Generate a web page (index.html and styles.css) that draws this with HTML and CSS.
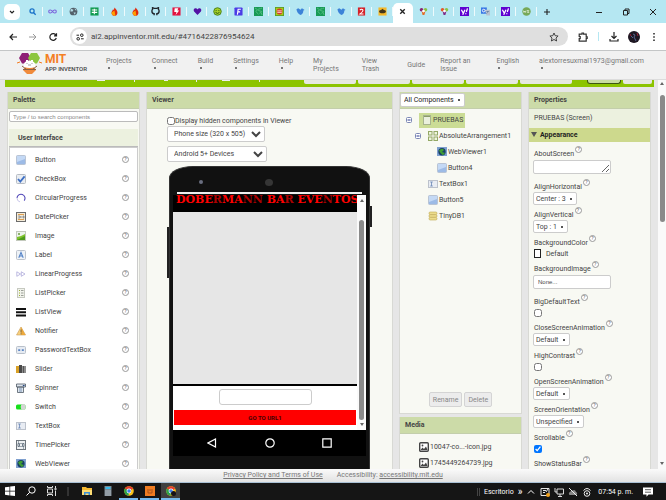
FILE: index.html
```html
<!DOCTYPE html>
<html lang="es">
<head>
    <meta charset="UTF-8">
    <meta name="viewport" content="width=device-width, initial-scale=1.0">
    <title>MIT App Inventor</title>
    <link rel="stylesheet" href="styles.css">
</head>
<body>
    <!-- Iconos compartidos -->
    <svg class="sprite" aria-hidden="true">
        <symbol id="i-button" viewBox="0 0 10 10"><rect x=".5" y=".5" width="9" height="9" rx="1" fill="#9dbbe6" stroke="#b9c4d4"/><path d="M1 1h8v3L1 7z" fill="#c4d9f5"/></symbol>
        <symbol id="i-check" viewBox="0 0 10 10"><rect x=".5" y=".5" width="9" height="9" rx="1" fill="#e9edf2" stroke="#b7bcc4"/><path d="M2 5l2.3 2.6L8.6 2.4" fill="none" stroke="#3d6fc4" stroke-width="1.8"/></symbol>
        <symbol id="i-circular" viewBox="0 0 10 10"><path d="M1 5a4 4 0 1 1 7.2 2.6" fill="none" stroke="#5148b8" stroke-width="1.1"/><path d="M1 5a4 4 0 0 0 3 3.9" fill="none" stroke="#c9c6ea"/></symbol>
        <symbol id="i-date" viewBox="0 0 10 10"><rect x=".5" y=".5" width="9" height="9" fill="#f5ecd9" stroke="#6c6c6c"/><path d="M2 2.5h6M2 7.5h6" stroke="#e0a050"/><path d="M2 4h2v2H2M5 4v2M7 4v2h1V4z" fill="none" stroke="#6d7681" stroke-width=".7"/></symbol>
        <symbol id="i-image" viewBox="0 0 10 10"><rect x=".5" y=".5" width="9" height="9" fill="#edf3ee" stroke="#c3c9bd"/><path d="M1 6l4-1 4-2v6H1z" fill="#7fc22c"/><path d="M1 9l8-4v4z" fill="#4c9a1c"/><circle cx="3" cy="3" r="1" fill="#6f9c42"/></symbol>
        <symbol id="i-label" viewBox="0 0 10 10"><rect x=".5" y=".5" width="9" height="9" rx="1" fill="#eef2f7" stroke="#bcc3cc"/><path d="M2.8 7.8L5 2.4l2.2 5.4M3.6 6h2.8" fill="none" stroke="#5382c7" stroke-width="1.1"/></symbol>
        <symbol id="i-linear" viewBox="0 0 10 10"><path d="M.8 2.8L4.5 5 .8 7.3zM5.3 2.8L9 5 5.3 7.3z" fill="none" stroke="#a49fd6" stroke-width=".7"/></symbol>
        <symbol id="i-listpicker" viewBox="0 0 10 10"><rect x="1.5" y=".5" width="7" height="9" fill="#f1f3ec" stroke="#c6c9c0"/><path d="M3 2.5h1M3 5h1M3 7.5h1" stroke="#9db02f" stroke-width="1.2"/><path d="M5 2.5h2.5M5 5h2.5M5 7.5h2.5" stroke="#9c9f98"/></symbol>
        <symbol id="i-listview" viewBox="0 0 10 10"><path d="M0 2h10M0 5.2h10M0 8.4h10" stroke="#111" stroke-width="2"/></symbol>
        <symbol id="i-notifier" viewBox="0 0 10 10"><path d="M5 1l4.5 8h-9z" fill="#f7cf7c" stroke="#c79a58" stroke-width=".6"/><path d="M5 1l4.500 8H5z" fill="#eda93c"/><path d="M5 3.5v3M5 7.3v1" stroke="#5c513d" stroke-width=".8"/></symbol>
        <symbol id="i-password" viewBox="0 0 10 10"><rect x=".5" y="1.5" width="9" height="7" rx="1" fill="#e6ebf2" stroke="#b9c0ca"/><path d="M2.2 5.2h2M5.8 5.2h2" stroke="#5b86c5" stroke-width="1.8"/></symbol>
        <symbol id="i-slider" viewBox="0 0 10 10"><path d="M0 2h4v7H0z" fill="#d9a126"/><path d="M3 1h3v8H3z" fill="#4a4a4a"/><path d="M6 2h4v7H6z" fill="#8e8e8e"/><path d="M7.5 2v7" stroke="#555"/></symbol>
        <symbol id="i-spinner" viewBox="0 0 10 10"><path d="M.5 1h9v3h-9zM1.500 4h6v5.500h-6z" fill="#dfe6ee" stroke="#4f5964" stroke-width=".8"/><path d="M6.500 2h2.500L7.700 3.600z" fill="#1c3f7c"/><path d="M3 6h3M3 8h3" stroke="#7a94b5"/></symbol>
        <symbol id="i-switch" viewBox="0 0 10 10"><rect x="0" y="2.500" width="9.500" height="5" rx="1.500" fill="#17e01c"/><rect x="4.800" y="2" width="4.700" height="6" rx="2.300" fill="#d4d4d4"/></symbol>
        <symbol id="i-textbox" viewBox="0 0 10 10"><rect x=".5" y="1.500" width="9" height="7" fill="#e8ecf3" stroke="#bcc2cc"/><path d="M2.200 3h2.600M3.500 3v4M2.200 7h2.600" fill="none" stroke="#6886b5" stroke-width=".8"/></symbol>
        <symbol id="i-time" viewBox="0 0 10 10"><rect x=".5" y=".5" width="9" height="9" fill="#edf0f2" stroke="#6d757c"/><path d="M2 3.500h1.500v3H2zM6.500 3.500H8v3H6.500z" fill="none" stroke="#50606e" stroke-width=".8"/><path d="M5 3v1M5 6v1M2 2h1M7 8h1" stroke="#50606e"/></symbol>
        <symbol id="i-web" viewBox="0 0 10 10"><rect width="10" height="9" fill="#7fa0cf"/><circle cx="5" cy="4.800" r="3.700" fill="#173f66"/><path d="M2 3.500q3-3 5-.5L5 5l3 1-2 2.300L3.500 6z" fill="#3f9e33"/></symbol>
        <symbol id="i-arrange" viewBox="0 0 10 10"><g fill="#eef5dc" stroke="#94a865"><rect x=".5" y=".5" width="3.500" height="3.500"/><rect x="6" y=".5" width="3.500" height="3.500"/><rect x=".5" y="6" width="3.500" height="3.500"/><rect x="6" y="6" width="3.500" height="3.500"/></g></symbol>
        <symbol id="i-screen" viewBox="0 0 10 10"><rect x="1.500" y=".5" width="7" height="9" fill="#eaf0dd" stroke="#a7b38f"/><path d="M2 1.500h6" stroke="#8b9c6a"/></symbol>
        <symbol id="i-db" viewBox="0 0 10 10"><g fill="#ecdc8c" stroke="#bfa851" stroke-width=".6"><rect x="1" y="1" width="8" height="2.600" rx="1.200"/><rect x="1" y="3.700" width="8" height="2.600" rx="1.200"/><rect x="1" y="6.400" width="8" height="2.600" rx="1.200"/></g></symbol>
        <symbol id="i-media" viewBox="0 0 10 10"><rect x=".7" y=".7" width="8.600" height="8.600" rx="1" fill="#fff" stroke="#444" stroke-width="1.400"/><path d="M1.500 8l2-2.500L5 7l2-2.500L8.500 8z" fill="#444"/><circle cx="3.500" cy="3.500" r=".9" fill="#444"/></symbol>
        <symbol id="i-minus" viewBox="0 0 6 6"><rect x=".5" y=".5" width="5" height="5" rx="1" fill="#fff" stroke="#7d88b5"/><path d="M1.500 3h3" stroke="#2a3a8f"/></symbol>
        <symbol id="i-green" viewBox="0 0 10 10"><path d="M0 0h10v10H0z" fill="#189a55"/><path d="M1 1l3 2-2 2 3 3M6 1L5 4l4 1M9 1L7 2M6 7l2-1 1 3" fill="none" stroke="#57c185"/></symbol>
        <symbol id="i-fire" viewBox="0 0 10 10"><path d="M5 .5C6 2 8.500 4 8.300 6.600 8 9 6.600 9.700 5 9.700S1.800 9 1.700 6.600C1.700 4.500 3 4.500 3.300 2.500L4.300 3.300z" fill="#e02c10"/><path d="M1.700 6L5 4l1 5.600C3.500 10 1.800 8.500 1.700 6z" fill="#ffa000"/></symbol>
        <symbol id="i-bird" viewBox="0 0 10 10"><path d="M.5 2.500l2-1L5 3l1.500-1.500 1.500.7 1.500 1-1.300.6C8 7 6.500 8.500 5 8.800 2.500 7.500 .8 5.500 .5 2.500z" fill="#3c83d8"/></symbol>
        <symbol id="i-yahoo" viewBox="0 0 10 10"><path d="M0 0h10v10H0z" fill="#5f01d1"/><path d="M1.500 3l2 3.500M5.500 3L3 8.500M8.300 1.500L7 5.500M6.400 7v1" fill="none" stroke="#fff" stroke-width="1.400"/></symbol>
        <symbol id="i-chrome" viewBox="0 0 10 10"><circle cx="5" cy="5" r="4.800" fill="#fbc116"/><path d="M5 5L.9 2.600A4.800 4.800 0 0 1 9.200 2.700z" fill="#e33b2e"/><path d="M5 5L.9 2.600A4.800 4.800 0 0 0 4.600 9.800z" fill="#2ba24c"/><circle cx="5" cy="5" r="2.400" fill="#fff"/><circle cx="5" cy="5" r="1.800" fill="#3b7de9"/></symbol>
    </svg>

    <!-- Pestañas del navegador -->
    <div class="tab-bar">
        <button class="tab-search" aria-label="Buscar pestañas"><svg viewBox="0 0 8 8"><path d="M2 3l2 2 2-2" fill="none" stroke="#222" stroke-width="1.200"/></svg></button>
        <div class="tabs">
            <span class="tab"><svg viewBox="0 0 10 10"><circle cx="4.500" cy="4.500" r="2.300" fill="none" stroke="#1a73c8" stroke-width="1.400"/><path d="M6 6l2.500 2.500" stroke="#1a73c8" stroke-width="1.500"/></svg></span>
            <span class="tab"><svg viewBox="0 0 10 10"><path d="M5 5C3.500 2.500 .8 3 .8 5s2.700 2.500 4.200 0 4.200-2 4.200 0-2.700 2.500-4.200 0z" fill="none" stroke="#7a62dc" stroke-width="1.200"/></svg></span>
            <span class="tab"><svg viewBox="0 0 10 10"><circle cx="5" cy="5" r="4.300" fill="#53606a"/><path d="M2 2l3 1-1 2-2.500 0M6 1.500l1 2 2 0M5 6l2.500 0-1 2.500z" fill="#b5dce6"/></svg></span>
            <span class="tab"><svg viewBox="0 0 10 10"><path d="M.5.5h9v9h-9z" fill="#129b50"/><path d="M2 3.300h6M2 6h6M4.800 2v6" stroke="#fff" stroke-width="1.200"/></svg></span>
            <span class="tab"><svg><use href="#i-fire"/></svg></span>
            <span class="tab"><svg><use href="#i-fire"/></svg></span>
            <span class="tab"><svg viewBox="0 0 10 10"><path d="M3.500 9.300V7.500C1.500 7.500 1 6 1 4.500c0-1 .3-1.500.8-2L1.700.8l2 .8h2.600l2-.8-.1 1.700c.5.5.8 1 .8 2 0 1.500-.5 3-2.500 3v1.800" fill="none" stroke="#20252b" stroke-width="1.500"/></svg></span>
            <span class="tab"><svg viewBox="0 0 10 10"><path d="M.5.500h9v9h-9z" fill="#e3123f"/><path d="M3 1.500h4L6 4h2L4 8.800 5 5.500H2.500z" fill="#fff"/></svg></span>
            <span class="tab"><svg viewBox="0 0 10 10"><path d="M5 9L1.200 5C0 3 1.200 1.300 2.700 1.300 4 1.300 4.700 2 5 2.800c.3-.8 1-1.500 2.300-1.500 1.500 0 2.700 1.700 1.500 3.700z" fill="#5312a4"/></svg></span>
            <span class="tab"><svg viewBox="0 0 10 10"><circle cx="5" cy="5" r="4.200" fill="#a5cf25" stroke="#437a17"/><path d="M2.800 6q2.200 2.300 4.400 0M3.500 3.500v1M6.500 3.500v1" fill="none" stroke="#254d12"/></svg></span>
            <span class="tab"><svg viewBox="0 0 10 10"><rect x=".5" y=".5" width="9" height="9" rx="1" fill="#4b3be6"/><path d="M3.800 8.500l.8-6h3M4.200 5.500h2.600" fill="none" stroke="#fff" stroke-width="1.300"/></svg></span>
            <span class="tab"><svg><use href="#i-green"/></svg></span>
            <span class="tab"><svg viewBox="0 0 10 10"><rect x=".5" y=".5" width="9" height="9" fill="#a8cb18" stroke="#5c9d20"/><circle cx="5" cy="5" r="3.200" fill="#d43a2a"/><path d="M2.500 4.300h5M2.500 6h5" stroke="#fff" stroke-width=".8"/></svg></span>
            <span class="tab"><svg><use href="#i-bird"/></svg></span>
            <span class="tab"><svg><use href="#i-green"/></svg></span>
            <span class="tab"><svg><use href="#i-bird"/></svg></span>
            <span class="tab"><svg viewBox="0 0 10 10"><path d="M1 .5h8v9H1z" fill="#d52128"/><path d="M3.200 3.500q1.800-2 3.300-.3Q7.300 4.500 3.300 7.700h3.900" fill="none" stroke="#fff" stroke-width="1.200"/></svg></span>
            <span class="tab"><svg viewBox="0 0 10 10"><path d="M.5.500h9v9h-9z" fill="#f5b82a"/><ellipse cx="5" cy="5" rx="3.800" ry="2" fill="#42371d"/><path d="M3 4l2-2 2 2z" fill="#42371d"/></svg></span>
            <span class="tab active"><button class="tab-close" aria-label="Cerrar pestaña"><svg viewBox="0 0 8 8"><path d="M2 2l4 4M6 2L2 6" stroke="#222" stroke-width="1.200"/></svg></button></span>
            <span class="tab"><svg viewBox="0 0 10 10"><circle cx="2.800" cy="3" r="2" fill="#8b2472"/><circle cx="7.200" cy="3" r="2" fill="#8bc34a"/><path d="M3 5h4l-1 4H4z" fill="#e46b24"/><circle cx="5" cy="4.500" r="1.500" fill="#fff"/></svg></span>
            <span class="tab"><svg viewBox="0 0 10 10"><circle cx="2.800" cy="3" r="2" fill="#e4572b"/><circle cx="7.200" cy="3" r="2" fill="#8bc34a"/><path d="M3 5h4l-1 4H4z" fill="#7e2a86"/><circle cx="5" cy="4.500" r="1.500" fill="#fff"/></svg></span>
            <span class="tab"><svg><use href="#i-yahoo"/></svg></span>
            <span class="tab"><svg viewBox="0 0 10 10"><path d="M0 .5h6.500v7H0z" fill="#3877e5"/><path d="M4.500 3H10v6.500H6z" fill="#b7c3d1"/><circle cx="3" cy="4" r="1.500" fill="none" stroke="#fff"/><path d="M6 5h3M7.500 4.500q0 2-1.500 3" fill="none" stroke="#5d7897" stroke-width=".7"/></svg></span>
            <span class="tab"><svg><use href="#i-yahoo"/></svg></span>
            <span class="tab"><svg viewBox="0 0 10 10"><circle cx="5" cy="5" r="4.700" fill="#77a857"/><path d="M1.500 4l.7 2 .8-1.500.8 1.500.7-2M5.500 4h2L6 6h2" fill="none" stroke="#e4efdc" stroke-width=".9"/></svg></span>
        </div>
        <button class="icon-button" aria-label="Nueva pestaña"><svg viewBox="0 0 10 10"><path d="M5 2v6M2 5h6" stroke="#222" stroke-width="1.100"/></svg></button>
        <div class="window-buttons">
            <button class="icon-button" aria-label="Minimizar"><svg viewBox="0 0 10 10"><path d="M2 5.500h6" stroke="#222"/></svg></button>
            <button class="icon-button" aria-label="Restaurar"><svg viewBox="0 0 10 10"><path d="M2.500 3.500h4v4.500h-4zM4 3.500V2h4v4.500H6.500" fill="none" stroke="#222"/></svg></button>
            <button class="icon-button" aria-label="Cerrar"><svg viewBox="0 0 10 10"><path d="M2 2l6 6M8 2L2 8" stroke="#222"/></svg></button>
        </div>
    </div>

    <!-- Barra de direcciones -->
    <div class="toolbar">
        <button class="icon-button" aria-label="Atrás"><svg viewBox="0 0 10 10"><path d="M9 5H2M5 2L2 5l3 3" fill="none" stroke="#222" stroke-width="1.200"/></svg></button>
        <button class="icon-button" aria-label="Adelante"><svg viewBox="0 0 10 10"><path d="M1 5h7M5 2l3 3-3 3" fill="none" stroke="#9a9a9a"/></svg></button>
        <button class="icon-button" aria-label="Recargar"><svg viewBox="0 0 10 10"><path d="M8 3.300A3.300 3.300 0 1 0 8.300 6M8.500 1.300v2.500H6" fill="none" stroke="#222" stroke-width="1.200"/></svg></button>
        <div class="omnibox">
            <button class="site-info" aria-label="Información del sitio"><svg viewBox="0 0 10 10"><path d="M1.500 3.200h2.500M6 6.800h2.700" stroke="#222"/><circle cx="6.800" cy="3.200" r="1.300" fill="none" stroke="#222"/><circle cx="3.200" cy="6.800" r="1.300" fill="none" stroke="#222"/></svg></button>
            <input class="url" type="text" aria-label="Dirección" value="ai2.appinventor.mit.edu/#4716422876954624">
            <button class="icon-button" aria-label="Favorito"><svg viewBox="0 0 10 10"><path d="M5 1l1.200 2.700 2.900.3L7 6l.6 3L5 7.500 2.400 9 3 6 .9 4l2.900-.3z" fill="none" stroke="#333" stroke-width=".9"/></svg></button>
        </div>
        <div class="toolbar-tools">
            <button class="icon-button" aria-label="Extensiones"><svg viewBox="0 0 10 10"><path d="M1.200 2.200H4V1h1.500v1.200h2.700v2.600h1v1.600h-1v2.800h-7V6.700h1V4.500h-1z" fill="none" stroke="#333" stroke-width="1.200"/></svg></button>
            <span class="tool-separator"></span>
            <button class="icon-button" aria-label="Descargas"><svg viewBox="0 0 10 10"><path d="M5 0v6M2.500 4L5 6.500 7.500 4M1 7v2h8V7" fill="none" stroke="#222" stroke-width="1.200"/></svg></button>
            <button class="icon-button" aria-label="Perfil"><svg class="avatar" viewBox="0 0 12 12"><circle cx="6" cy="6" r="6" fill="#1e1722"/><path d="M5 3l2 1-1 2 2 4M3 5l2 2" fill="none" stroke="#56628e"/><path d="M2 3l1 2M9 2l1 3" stroke="#9e2035"/></svg></button>
            <button class="icon-button" aria-label="Menú"><svg viewBox="0 0 10 10"><path d="M5 1v1.500M5 4.300v1.500M5 7.600v1.500" stroke="#222" stroke-width="1.500"/></svg></button>
        </div>
    </div>

    <!-- Encabezado de la aplicación -->
    <header class="app-header">
        <a class="logo" href="#">
            <svg viewBox="0 0 25 21"><path d="M5 0h6l3 5-3 5.500H5L2 5z" fill="#8e1f75"/><path d="M14 0h6l3 5-3 5.500h-6l-3-5.500z" fill="#8cc63f"/><path d="M0 10l3-1M25 10l-3-1" stroke="#f47b20"/><path d="M8 14h9l2 3-4 4H10l-4-4z" fill="#f08a3a"/><path d="M6 16.500h13M5 13l4 3M20 13l-4 3" stroke="#8a6144"/><path d="M7 14q-1-3 1-5 4-3 9 0 2 2 1 5-5 2-11 0z" fill="#fff"/><path d="M10 9V7M15 9V7" stroke="#fff" stroke-width="2"/><path d="M10 10v1M15 10v1M11 12h3" stroke="#777" stroke-width=".7"/></svg>
            <span class="logo-text"><strong>MIT</strong><span>APP INVENTOR</span></span>
        </a>
        <nav class="menu">
            <a class="drop" href="#">Projects</a>
            <a class="drop" href="#">Connect</a>
            <a class="drop" href="#">Build</a>
            <a class="drop" href="#">Settings</a>
            <a class="drop" href="#">Help</a>
            <a class="wide" href="#">My<br>Projects</a>
            <a class="wide" href="#">View<br>Trash</a>
            <a class="single" href="#">Guide</a>
            <a class="wider" href="#">Report an<br>Issue</a>
            <a class="drop" href="#">English</a>
            <a class="drop" href="#">alextorresuxmal1973@gmail.com</a>
        </nav>
    </header>

    <div class="page">
        <div class="workspace">
            <div class="project-bar">
                <span class="bar-name"></span>
                <span class="bar-buttons"><i></i><i></i><i></i><i></i><i></i></span>
                <span class="bar-modes"><i class="pressed"></i><i></i></span>
            </div>
            <main class="columns">
                <section class="panel palette">
                    <h2>Palette</h2>
                    <input class="search" type="text" aria-label="Search components" placeholder="Type / to search components">
                    <h3>User Interface</h3>
                    <ul class="component-list">
                        <li><svg><use href="#i-button"/></svg><span>Button</span><button class="help">?</button></li>
                        <li><svg><use href="#i-check"/></svg><span>CheckBox</span><button class="help">?</button></li>
                        <li><svg><use href="#i-circular"/></svg><span>CircularProgress</span><button class="help">?</button></li>
                        <li><svg><use href="#i-date"/></svg><span>DatePicker</span><button class="help">?</button></li>
                        <li><svg><use href="#i-image"/></svg><span>Image</span><button class="help">?</button></li>
                        <li><svg><use href="#i-label"/></svg><span>Label</span><button class="help">?</button></li>
                        <li><svg><use href="#i-linear"/></svg><span>LinearProgress</span><button class="help">?</button></li>
                        <li><svg><use href="#i-listpicker"/></svg><span>ListPicker</span><button class="help">?</button></li>
                        <li><svg><use href="#i-listview"/></svg><span>ListView</span><button class="help">?</button></li>
                        <li><svg><use href="#i-notifier"/></svg><span>Notifier</span><button class="help">?</button></li>
                        <li><svg><use href="#i-password"/></svg><span>PasswordTextBox</span><button class="help">?</button></li>
                        <li><svg><use href="#i-slider"/></svg><span>Slider</span><button class="help">?</button></li>
                        <li><svg><use href="#i-spinner"/></svg><span>Spinner</span><button class="help">?</button></li>
                        <li><svg><use href="#i-switch"/></svg><span>Switch</span><button class="help">?</button></li>
                        <li><svg><use href="#i-textbox"/></svg><span>TextBox</span><button class="help">?</button></li>
                        <li><svg><use href="#i-time"/></svg><span>TimePicker</span><button class="help">?</button></li>
                        <li><svg><use href="#i-web"/></svg><span>WebViewer</span><button class="help">?</button></li>
                    </ul>
                </section>

                <section class="panel viewer">
                    <h2>Viewer</h2>
                    <div class="viewer-body">
                        <label class="hidden-toggle"><input type="checkbox">Display hidden components in Viewer</label>
                        <div class="device-select"><select aria-label="Screen size"><option>Phone size (320 x 505)</option></select></div>
                        <div class="device-select wide"><select aria-label="Device"><option>Android 5+ Devices</option></select></div>
                        <div class="phone">
                            <div class="phone-top"><i class="sensor"></i><i class="camera"></i></div>
                            <div class="phone-status"></div>
                            <div class="phone-screen">
                                <div class="phone-content">
                                    <div class="banner">DOBE<i>R</i>MA<i>NN</i> BA<i>R</i> EVE<i>N</i>TOS</div>
                                    <div class="web-area"></div>
                                    <input class="phone-input" type="text" aria-label="TextBox1">
                                    <button class="phone-button">GO TO URL1</button>
                                </div>
                                <div class="scrollbar"><i class="up"></i><span class="thumb"></span><i class="down"></i></div>
                            </div>
                            <div class="phone-nav">
                                <svg viewBox="0 0 10 10"><path d="M8.500 1v8L1 5z" fill="none" stroke="#fff" stroke-width="1.200"/></svg>
                                <svg viewBox="0 0 10 10"><circle cx="5" cy="5" r="4.200" fill="none" stroke="#fff" stroke-width="1.200"/></svg>
                                <svg viewBox="0 0 10 10"><path d="M.8.8h8.400v8.400H.8z" fill="none" stroke="#fff" stroke-width="1.200"/></svg>
                            </div>
                            <div class="phone-bottom"></div>
                        </div>
                    </div>
                </section>

                <div class="side">
                    <section class="panel components">
                        <div class="filter"><select aria-label="Components filter"><option>All Components</option></select></div>
                        <ul class="tree">
                            <li><svg class="fold"><use href="#i-minus"/></svg><span class="node selected"><svg><use href="#i-screen"/></svg>PRUEBAS</span></li>
                            <li class="level-1"><svg class="fold"><use href="#i-minus"/></svg><span class="node"><svg><use href="#i-arrange"/></svg>AbsoluteArrangement1</span></li>
                            <li class="level-3"><span class="node"><svg><use href="#i-web"/></svg>WebViewer1</span></li>
                            <li class="level-3"><span class="node"><svg><use href="#i-button"/></svg>Button4</span></li>
                            <li class="level-2"><span class="node"><svg><use href="#i-textbox"/></svg>TextBox1</span></li>
                            <li class="level-2"><span class="node"><svg><use href="#i-button"/></svg>Button5</span></li>
                            <li class="level-2"><span class="node"><svg><use href="#i-db"/></svg>TinyDB1</span></li>
                        </ul>
                        <div class="tree-actions"><button disabled>Rename</button><button disabled>Delete</button></div>
                    </section>
                    <section class="panel media">
                        <h2>Media</h2>
                        <ul>
                            <li><svg><use href="#i-media"/></svg>10047-co...-icon.jpg</li>
                            <li><svg><use href="#i-media"/></svg>1745449264739.jpg</li>
                        </ul>
                    </section>
                </div>

                <section class="panel properties">
                    <h2>Properties</h2>
                    <p class="screen-name">PRUEBAS (Screen)</p>
                    <h3>Appearance</h3>
                    <div class="props">
                        <div class="prop text"><label for="about">AboutScreen</label><button class="help">?</button><textarea id="about"></textarea></div>
                        <div class="prop"><label for="align-h">AlignHorizontal</label><button class="help">?</button><select id="align-h"><option>Center : 3</option></select></div>
                        <div class="prop"><label for="align-v">AlignVertical</label><button class="help">?</button><select id="align-v"><option>Top : 1</option></select></div>
                        <div class="prop"><label for="bg-color">BackgroundColor</label><button class="help">?</button><button class="color" id="bg-color"><i></i>Default</button></div>
                        <div class="prop file"><label for="bg-image">BackgroundImage</label><button class="help">?</button><input id="bg-image" type="text" value="None..."></div>
                        <div class="prop"><label for="big-text">BigDefaultText</label><button class="help">?</button><input id="big-text" type="checkbox"></div>
                        <div class="prop"><label for="close-anim">CloseScreenAnimation</label><button class="help">?</button><select id="close-anim"><option>Default</option></select></div>
                        <div class="prop"><label for="contrast">HighContrast</label><button class="help">?</button><input id="contrast" type="checkbox"></div>
                        <div class="prop"><label for="open-anim">OpenScreenAnimation</label><button class="help">?</button><select id="open-anim"><option>Default</option></select></div>
                        <div class="prop"><label for="orientation">ScreenOrientation</label><button class="help">?</button><select id="orientation"><option>Unspecified</option></select></div>
                        <div class="prop"><label for="scrollable">Scrollable</label><button class="help">?</button><input id="scrollable" type="checkbox" checked></div>
                        <div class="prop"><label for="status-bar">ShowStatusBar</label><button class="help">?</button><input id="status-bar" type="checkbox" checked></div>
                    </div>
                </section>
            </main>
        </div>
        <div class="scrollbar page-scroll"><i class="up"></i><span class="thumb"></span><i class="down"></i></div>
    </div>

    <footer class="app-footer">
        <a href="#">Privacy Policy and Terms of Use</a>
        <span>Accessibility: <a href="#">accessibility.mit.edu</a></span>
    </footer>

    <!-- Barra de tareas -->
    <div class="taskbar">
        <div class="task-icons">
            <button aria-label="Inicio"><svg viewBox="0 0 10 10"><path d="M0 1.300L4.500.7v4H0zM5.200.6L10 0v4.700H5.200zM0 5.400h4.500v4L0 8.800zM5.200 5.400H10V10l-4.800-.5z" fill="#fff"/></svg></button>
            <button aria-label="Buscar"><svg viewBox="0 0 10 10"><circle cx="6" cy="4" r="3.200" fill="none" stroke="#fff"/><path d="M3.700 6.300L.5 9.500" stroke="#fff"/></svg></button>
            <button aria-label="Vista de tareas"><svg viewBox="0 0 10 10"><path d="M.5 0v1.500h5V0M.5 3h5v4h-5zM.5 10V8.500h5V10M8.500 0v2M8.500 4.500V10" fill="none" stroke="#ddd"/><path d="M7.500 3h2" stroke="#fff" stroke-width="1.500"/></svg></button>
            <span class="task-line"></span>
            <button aria-label="Explorador"><svg viewBox="0 0 10 10"><path d="M0 1h4l1 1h5v7H0z" fill="#f6b830"/><path d="M0 4h10v5H0z" fill="#fddc74"/><path d="M2 6h6v3H6.500V7.500h-3V9H2z" fill="#3b8fd4"/></svg></button>
            <button aria-label="Calculadora"><svg viewBox="0 0 10 10"><path d="M1.500 0h7v10h-7z" fill="#7b8790"/><path d="M2.500 1h5v2h-5z" fill="#36b8ea"/><path d="M2.500 5h5M2.500 7h5M2.500 9h5" stroke="#dce2e6" stroke-dasharray="1 1"/></svg></button>
            <button class="running" aria-label="Chrome"><svg><use href="#i-chrome"/></svg></button>
            <button class="running" aria-label="App Inventor"><svg viewBox="0 0 10 10"><path d="M0 0h10v10H0z" fill="#f07c21"/><path d="M3 3v4h4V3M5 3v2" fill="none" stroke="#a9521b"/></svg></button>
            <button class="running current" aria-label="Chrome"><svg viewBox="0 0 10 10"><use href="#i-chrome"/><circle cx="7.500" cy="7.500" r="2.500" fill="#16121b"/></svg></button>
        </div>
        <div class="tray">
            <span class="grip"></span>
            <span class="desktop">Escritorio</span>
            <span class="more">»</span>
            <svg viewBox="0 0 10 10"><path d="M2 6.500l3-3 3 3" fill="none" stroke="#fff"/></svg>
            <svg viewBox="0 0 10 10"><path d="M1 1.500h8v7H1zM3 3.500h3M3 5.500h2M6 5l2-3" fill="none" stroke="#e6e6e6"/><circle cx="8" cy="8" r="2" fill="#f2a11b"/></svg>
            <svg viewBox="0 0 10 10"><path d="M3 2h6.500v5H3zM1 1v4h2M4 9.500h4M6 7v2" fill="none" stroke="#eee" stroke-width=".9"/></svg>
            <svg viewBox="0 0 10 10"><path d="M1.500 8h7q1.500-2-.5-3-1-3-3.500-1.500Q2 4 2 5 0 6 1.500 8z" fill="#888"/><path d="M1 1l8 8" stroke="#eee"/></svg>
            <svg viewBox="0 0 10 10"><circle cx="5" cy="6.500" r="2.800" fill="none" stroke="#eee"/><circle cx="5" cy="6.500" r="1" fill="#eee"/><path d="M1.500 3.500q3.500-4 7 0" fill="none" stroke="#eee"/></svg>
            <span class="clock">07:54 p. m.</span>
            <svg class="notice" viewBox="0 0 10 10"><path d="M0 .5h10v7H5.500L3.500 9.800V7.500H0z" fill="#fff"/><path d="M2 2.700h6M2 5.200h6" stroke="#333" stroke-width=".8"/></svg>
        </div>
    </div>
</body>
</html>
```

FILE: styles.css
```css
* {
    box-sizing: border-box;
}

body {
    margin: 0;
    height: 100vh;
    display: flex;
    flex-direction: column;
    overflow: hidden;
    font-family: Roboto, "Liberation Sans", sans-serif;
    font-size: 7px;
    line-height: 10px;
    color: #444;
    background: #e6e6e6;
}

button, input, select, textarea {
    font: inherit;
    color: inherit;
    margin: 0;
    padding: 0;
}

button {
    border: none;
    background: none;
}

ul, h2, h3, p {
    margin: 0;
    padding: 0;
    list-style: none;
    font-size: 7px;
}

svg {
    width: 10px;
    height: 10px;
    display: block;
    flex: none;
}

i {
    font-style: normal;
}

.sprite {
    position: absolute;
    width: 0;
    height: 0;
}

/* Pestañas */
.tab-bar {
    flex: none;
    display: flex;
    align-items: center;
    height: 23px;
    padding-left: 4px;
    background: #b5e7f2;
}

.tab-search {
    display: flex;
    align-items: center;
    justify-content: center;
    width: 16px;
    height: 16px;
    margin-right: 2px;
    border-radius: 5px;
    background: #fff;
}

.tab-search svg, .tab-close svg {
    width: 8px;
    height: 8px;
}

.tabs {
    flex: 1;
    display: flex;
    align-self: stretch;
}

.tab {
    flex: 1;
    display: flex;
    align-items: center;
    justify-content: center;
    background: linear-gradient(#eefafc, #eefafc) right center / 1px 9px no-repeat;
}

.tab svg {
    width: 9px;
    height: 9px;
}

.tab.active {
    margin-top: 3px;
    padding-bottom: 3px;
    border-radius: 5px 5px 0 0;
    background: #fff;
}

.icon-button {
    display: flex;
    align-items: center;
    justify-content: center;
    width: 20px;
    height: 16px;
}

.window-buttons {
    display: flex;
    margin-left: 28px;
}

.window-buttons .icon-button {
    width: 27px;
}

/* Barra de direcciones */
.toolbar {
    flex: none;
    display: flex;
    align-items: center;
    height: 28px;
    padding-left: 3px;
    background: #fff;
    border-bottom: 1px solid #c4c6c7;
}

.omnibox {
    flex: 1;
    display: flex;
    align-items: center;
    height: 19px;
    margin-left: 7px;
    padding: 0 4px 0 2px;
    border-radius: 10px;
    background: #dfdfdf;
}

.site-info {
    display: flex;
    align-items: center;
    justify-content: center;
    width: 15px;
    height: 15px;
    border-radius: 50%;
    background: #fff;
}

.url {
    flex: 1;
    margin-left: 4px;
    border: none;
    background: none;
    font-size: 8px;
    color: #444;
}

.toolbar-tools {
    display: flex;
    align-items: center;
    margin-left: 5px;
    padding-right: 2px;
}

.tool-separator {
    width: 1px;
    height: 9px;
    margin: 0 5px;
    background: #b5e7f2;
}

.avatar {
    width: 12px;
    height: 12px;
}

/* Encabezado */
.app-header {
    flex: none;
    display: flex;
    height: 29px;
    padding-left: 17px;
    background: #f1f1f1;
    border-bottom: 1px solid #dcdcdc;
}

.logo {
    display: flex;
    width: 89px;
    padding-top: 2px;
    text-decoration: none;
    color: #444;
}

.logo svg {
    width: 25px;
    height: 21px;
}

.logo-text {
    display: flex;
    flex-direction: column;
    margin-left: 3px;
    font-size: 6px;
    font-weight: 500;
    line-height: 7px;
}

.logo-text strong {
    font-size: 12px;
    font-weight: 700;
    line-height: 12px;
    color: #f47f24;
}

.menu {
    display: flex;
    gap: 20px;
    padding-top: 6px;
    line-height: 8px;
    white-space: nowrap;
}

.menu a {
    color: #777;
    text-decoration: none;
}

.menu .wide {
    margin-right: 3px;
}

.menu .wider {
    margin-right: 6px;
}

.menu .single {
    margin: 4px -5px 0 5px;
}

.drop::after {
    content: "";
    display: block;
    width: 2px;
    height: 2px;
    margin: 2px 0 0 2px;
    background: #777;
}

/* Area de trabajo */
.page {
    flex: 1;
    display: flex;
    min-height: 0;
}

.workspace {
    flex: 1;
    display: flex;
    flex-direction: column;
    min-width: 0;
    padding: 0 4px 0 5px;
}

.project-bar {
    flex: none;
    display: flex;
    height: 7px;
    background: #8cc400;
}

.bar-name {
    width: 299px;
    background:
        linear-gradient(#eee, #eee) 92px 0 / 8px 1px no-repeat,
        linear-gradient(#eee, #eee) 129px 0 / 1px 2px no-repeat,
        linear-gradient(#eee, #eee) 159px 0 / 4px 1px no-repeat,
        linear-gradient(#eee, #eee) 191px 0 / 1px 2px no-repeat,
        linear-gradient(#eee, #eee) 217px 0 / 8px 1px no-repeat,
        linear-gradient(#eee, #eee) 254px 0 / 1px 2px no-repeat;
}

.bar-buttons {
    flex: 1;
    display: flex;
    gap: 2px;
}

.bar-modes {
    display: flex;
    gap: 2px;
    margin: 0 2px 0 15px;
}

.bar-buttons i, .bar-modes i {
    flex: 1;
    height: 4px;
    border-radius: 0 0 2px 2px;
    background: #e6e8e0;
}

.bar-modes i {
    flex: none;
    width: 29px;
}

.bar-modes .pressed {
    width: 34px;
    border: solid #3d5710;
    border-width: 0 1px 1px;
    border-radius: 0 0 3px 3px;
    background: #c8dda0;
}

.columns {
    flex: 1;
    display: grid;
    grid-template-columns: 133px 1fr 123px 123px;
    gap: 6px;
    min-height: 0;
    padding: 5px 3px 0 2px;
    overflow: hidden;
}

.panel {
    min-width: 0;
    overflow: hidden;
    background: #f8f9f3;
    border: solid #d8d9d4;
    border-width: 0 1px;
}

.panel h2 {
    height: 17px;
    padding-left: 5px;
    line-height: 17px;
    background: #ccdba8;
    border-bottom: 1px solid #c3ceab;
}

/* Paleta */
.search {
    display: block;
    width: calc(100% - 2px);
    height: 11px;
    margin: 2px 1px 7px;
    padding: 0 3px;
    border: 1px solid #bbb;
    border-radius: 2px;
    background: #fff;
    font-family: "Liberation Sans", sans-serif;
    font-size: 6px;
}

.search::placeholder {
    color: #888;
}

.palette h3 {
    height: 18px;
    margin: 0 1px;
    padding: 1px 0 0 9px;
    line-height: 17px;
    background: #ecf1df;
    border-bottom: 1px solid #bbb;
}

.component-list {
    margin: 0 1px;
    padding-top: 2px;
    background: #fff;
    border: solid #ccc;
    border-width: 1px 1px 0;
}

.component-list li {
    display: flex;
    align-items: center;
    height: 19px;
    padding: 0 8px 0 6px;
}

.component-list span {
    flex: 1;
    margin-left: 9px;
}

.help {
    flex: none;
    width: 7px;
    height: 7px;
    border: 1px solid #999;
    border-radius: 50%;
    background: #fff;
    font-size: 5px;
    line-height: 5px;
    text-align: center;
    color: #555;
}

/* Visor */
.viewer-body {
    padding: 6px 0 0 20px;
}

.hidden-toggle {
    display: flex;
    align-items: center;
    height: 11px;
}

input[type="checkbox"] {
    width: 8px;
    height: 8px;
}

.device-select select {
    display: block;
    width: 98px;
    height: 16px;
    margin-bottom: 4px;
    padding-left: 2px;
    border: 1px solid #ccc;
    border-radius: 2px;
    background: #fff;
}

.device-select.wide select {
    width: 100px;
}

.phone {
    width: 201px;
    margin-left: 2px;
    padding: 0 3px;
    border-radius: 24px 24px 0 0 / 12px 12px 0 0;
    background: #111;
    border: 1px solid #333;
    border-bottom: none;
    position: relative;
}

.phone::before, .phone::after {
    content: "";
    position: absolute;
    width: 2px;
    background: #222;
}

.phone::before {
    left: -3px;
    top: 60px;
    height: 51px;
}

.phone::after {
    right: -3px;
    top: 39px;
    height: 21px;
}

.phone-top {
    display: flex;
    align-items: center;
    height: 24px;
    padding: 6px 0 0 26px;
}

.sensor {
    width: 4px;
    height: 4px;
    border-radius: 50%;
    background: #6a6e80;
}

.camera {
    width: 8px;
    height: 7px;
    margin-left: 62px;
    border-radius: 50%;
    background: #363636;
}

.phone-status {
    height: 4px;
    margin: 0 4px;
    background: linear-gradient(#eee, #eee) 0 1px / 100% 2px no-repeat;
}

.phone-screen {
    display: flex;
    height: 235px;
    background: #fff;
}

.phone-content {
    flex: 1;
    display: flex;
    flex-direction: column;
    align-items: center;
    min-width: 0;
}

.banner {
    align-self: stretch;
    height: 17px;
    padding-left: 3px;
    background: #000;
    color: #f00;
    font-family: "DejaVu Serif", serif;
    font-size: 11px;
    font-weight: bold;
    line-height: 10px;
    white-space: nowrap;
}

.banner i {
    color: #a00;
}

.web-area {
    align-self: stretch;
    height: 174px;
    background: #e6e6e6;
    border-bottom: 2px solid #000;
}

.phone-input {
    width: 93px;
    height: 16px;
    margin: 3px 0 5px;
    border: 1px solid #ccc;
    border-radius: 3px;
    background: #fff;
}

.phone-button {
    align-self: stretch;
    height: 15px;
    margin: 0 1px;
    background: #f00;
    color: #400;
    font-size: 6px;
    font-weight: bold;
}

.scrollbar {
    display: flex;
    flex-direction: column;
    align-items: center;
    width: 9px;
    padding: 4px 0;
    background: #fafafa;
}

.scrollbar .up, .scrollbar .down {
    border: solid transparent;
    border-width: 0 2px 3px;
    border-bottom-color: #666;
}

.scrollbar .down {
    margin-top: auto;
    border-width: 3px 2px 0;
    border-top-color: #666;
}

.scrollbar .thumb {
    width: 5px;
    height: 200px;
    margin-top: 18px;
    border-radius: 3px;
    background: #8a8a8a;
}

.phone-nav {
    display: flex;
    align-items: center;
    justify-content: space-between;
    height: 26px;
    padding: 0 34px;
    background: #000;
}

.phone-bottom {
    height: 14px;
}

/* Componentes y medios */
.side {
    display: flex;
    flex-direction: column;
    gap: 3px;
    min-width: 0;
}

.components {
    display: flex;
    flex-direction: column;
    height: 322px;
    border-bottom: 1px solid #d8d9d4;
}

.filter {
    height: 17px;
    padding-top: 1px;
    background: #ccdba8;
    border-bottom: 1px solid #c3ceab;
}

.filter select, .prop select {
    appearance: none;
    height: 13px;
    padding: 0 10px 0 2px;
    border: 1px solid #ccc;
    border-radius: 2px;
    background: linear-gradient(#555, #555) right 4px center / 2px 2px no-repeat #fff;
    display: block;
}

.filter select {
    height: 14px;
    padding-left: 3px;
    color: #222;
}

.tree {
    padding: 3px 0 0 6px;
}

.tree li {
    display: flex;
    align-items: center;
    height: 16px;
}

.fold {
    width: 6px;
    height: 6px;
    margin-right: 7px;
}

.node {
    display: flex;
    align-items: center;
    gap: 1px;
    height: 15px;
    white-space: nowrap;
}

.selected {
    padding: 0 2px 0 3px;
    background: #cbdc95;
}

.level-1 {
    padding-left: 9px;
}

.level-2 {
    padding-left: 22px;
}

.level-3 {
    padding-left: 31px;
}

.tree-actions {
    display: flex;
    justify-content: center;
    gap: 2px;
    margin: auto 0 6px;
}

.tree-actions button {
    height: 15px;
    padding: 0 3px;
    border: 1px solid #d4d4d4;
    border-radius: 2px;
    background: #ececec;
    color: #888;
}

.media {
    flex: 1;
}

.media ul {
    padding: 5px 0 0 19px;
}

.media li {
    display: flex;
    align-items: center;
    gap: 1px;
    height: 16px;
}

/* Propiedades */
.screen-name {
    height: 19px;
    padding-left: 5px;
    line-height: 19px;
    background: #ecf1df;
}

.properties h3 {
    height: 14px;
    padding-left: 2px;
    line-height: 14px;
    background: #cdd98d;
    color: #222;
}

.properties h3::before {
    content: "";
    display: inline-block;
    margin-right: 3px;
    border: solid transparent;
    border-width: 5px 3px 0;
    border-top-color: #555;
}

.props {
    padding: 7px 4px 0;
}

.prop {
    display: grid;
    grid-template-columns: auto 1fr;
    grid-template-rows: 10px auto;
    justify-items: start;
    margin-bottom: 5px;
}

.prop label {
    margin-left: 1px;
}

.prop .help {
    margin: -3px 0 0 1px;
}

.prop > :last-child {
    grid-column: 1 / -1;
}

.prop textarea, .prop input[type="text"] {
    width: 78px;
    height: 14px;
    margin-top: 1px;
    padding: 0 4px;
    border: 1px solid #ccc;
    border-radius: 2px;
    background: #fff;
}

.prop.text, .prop.file {
    margin-bottom: 8px;
}

.prop input[type="text"] {
    font-family: "Liberation Sans", sans-serif;
    font-size: 6px;
}

.prop input[type="checkbox"] {
    margin: 2px 0 1px 1px;
}

.color {
    display: flex;
    align-items: center;
    height: 11px;
}

.color i {
    width: 7px;
    height: 9px;
    margin: 0 5px 0 1px;
    border: 1px solid #222;
    background: #fff;
}

.page-scroll {
    width: 8px;
    padding: 2px 0 4px;
}

.page-scroll .thumb {
    height: 127px;
    margin-top: 10px;
}

/* Pie */
.app-footer {
    flex: none;
    display: flex;
    justify-content: center;
    gap: 14px;
    height: 13px;
    line-height: 13px;
    background: linear-gradient(#fafafa, #e2e2e2);
    color: #777;
}

.app-footer a {
    color: #777;
}

/* Barra de tareas */
.taskbar {
    flex: none;
    display: flex;
    justify-content: space-between;
    height: 18px;
    border-top: 1px solid #a9c0d4;
    background: #151515;
    color: #fff;
}

.task-icons {
    display: flex;
}

.task-icons button {
    display: flex;
    align-items: center;
    justify-content: center;
    width: 19px;
    margin-right: 2px;
    border-bottom: 2px solid transparent;
}

.task-icons .running {
    border-bottom-color: #76b9ed;
}

.task-icons .current {
    background: #404040;
}

.task-line {
    width: 2px;
    height: 9px;
    margin: 4px 8px 0 4px;
    background: #333;
}

.tray {
    display: flex;
    align-items: center;
    gap: 4px;
    padding-right: 13px;
}

.grip {
    width: 3px;
    height: 8px;
    border: solid #444;
    border-width: 0 1px;
}

.more {
    font-size: 10px;
}

.clock {
    margin-left: 2px;
    white-space: nowrap;
}

.notice {
    margin-left: 6px;
}
```
